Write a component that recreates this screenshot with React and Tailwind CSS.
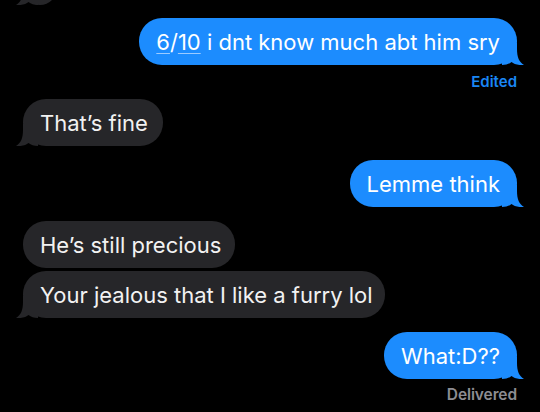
import clsx from 'clsx'

function Tail({ side, color }) {
  return (
    <svg
      viewBox="0 0 22 22"
      className={clsx(
        'absolute bottom-0 w-[22px] h-[22px]',
        side === 'right' ? 'right-[-7px]' : 'left-[-7px] -scale-x-100',
        color
      )}
    >
      <path
        fill="currentColor"
        d="M0 0 H15 V6 C15 14 17 19 22 22 C16 22.5 12 21 9.5 19 C7 21 4 22 0 22 Z"
      />
    </svg>
  )
}

function Bubble({ side, tail, className, children }) {
  const mine = side === 'right'
  return (
    <div
      className={clsx(
        'relative h-[47px] w-fit shrink-0 flex items-center rounded-[23px] px-[17px] text-[22px] leading-none',
        mine ? 'self-end bg-[#1c8cfe] text-white' : 'self-start bg-[#262629] text-[#f2f2f2]',
        className
      )}
    >
      <span className="relative z-10 whitespace-nowrap">{children}</span>
      {tail && (
        <Tail side={side} color={mine ? 'text-[#1c8cfe]' : 'text-[#262629]'} />
      )}
    </div>
  )
}

export default function App() {
  return (
    <div
      className="h-[412px] w-[540px] overflow-hidden bg-black flex flex-col px-[23px]"
      style={{ fontFamily: 'Inter, "Noto Sans", sans-serif' }}
    >
      {/* previous message, scrolled off the top */}
      <Bubble side="left" tail className="mt-[-42px] w-[334px]" />

      <Bubble side="right" tail className="mt-[13px]">
        <span className="underline decoration-[#9ccbff] decoration-1 underline-offset-[3px]">6</span>/
        <span className="underline decoration-[#9ccbff] decoration-1 underline-offset-[3px]">10</span> i dnt
        know much abt him sry
      </Bubble>
      <p className="self-end mt-[8px] text-[15px] leading-[17px] font-semibold text-[#1a86f5]">Edited</p>

      <Bubble side="left" tail className="mt-[9px] pr-[15px]">
        That’s fine
      </Bubble>

      <Bubble side="right" tail className="mt-[14px]">
        Lemme think
      </Bubble>

      <Bubble side="left" className="mt-[14px] pr-[14px]">
        He’s still precious
      </Bubble>
      <Bubble side="left" tail className="mt-[3px] pr-[12px]">
        Your jealous that I like a furry lol
      </Bubble>

      <Bubble side="right" tail className="mt-[14px]">
        What:D??
      </Bubble>
      <p className="self-end mt-[7px] text-[15.5px] leading-[18px] font-semibold tracking-[-0.1px] text-[#8d8d92]">
        Delivered
      </p>
    </div>
  )
}
